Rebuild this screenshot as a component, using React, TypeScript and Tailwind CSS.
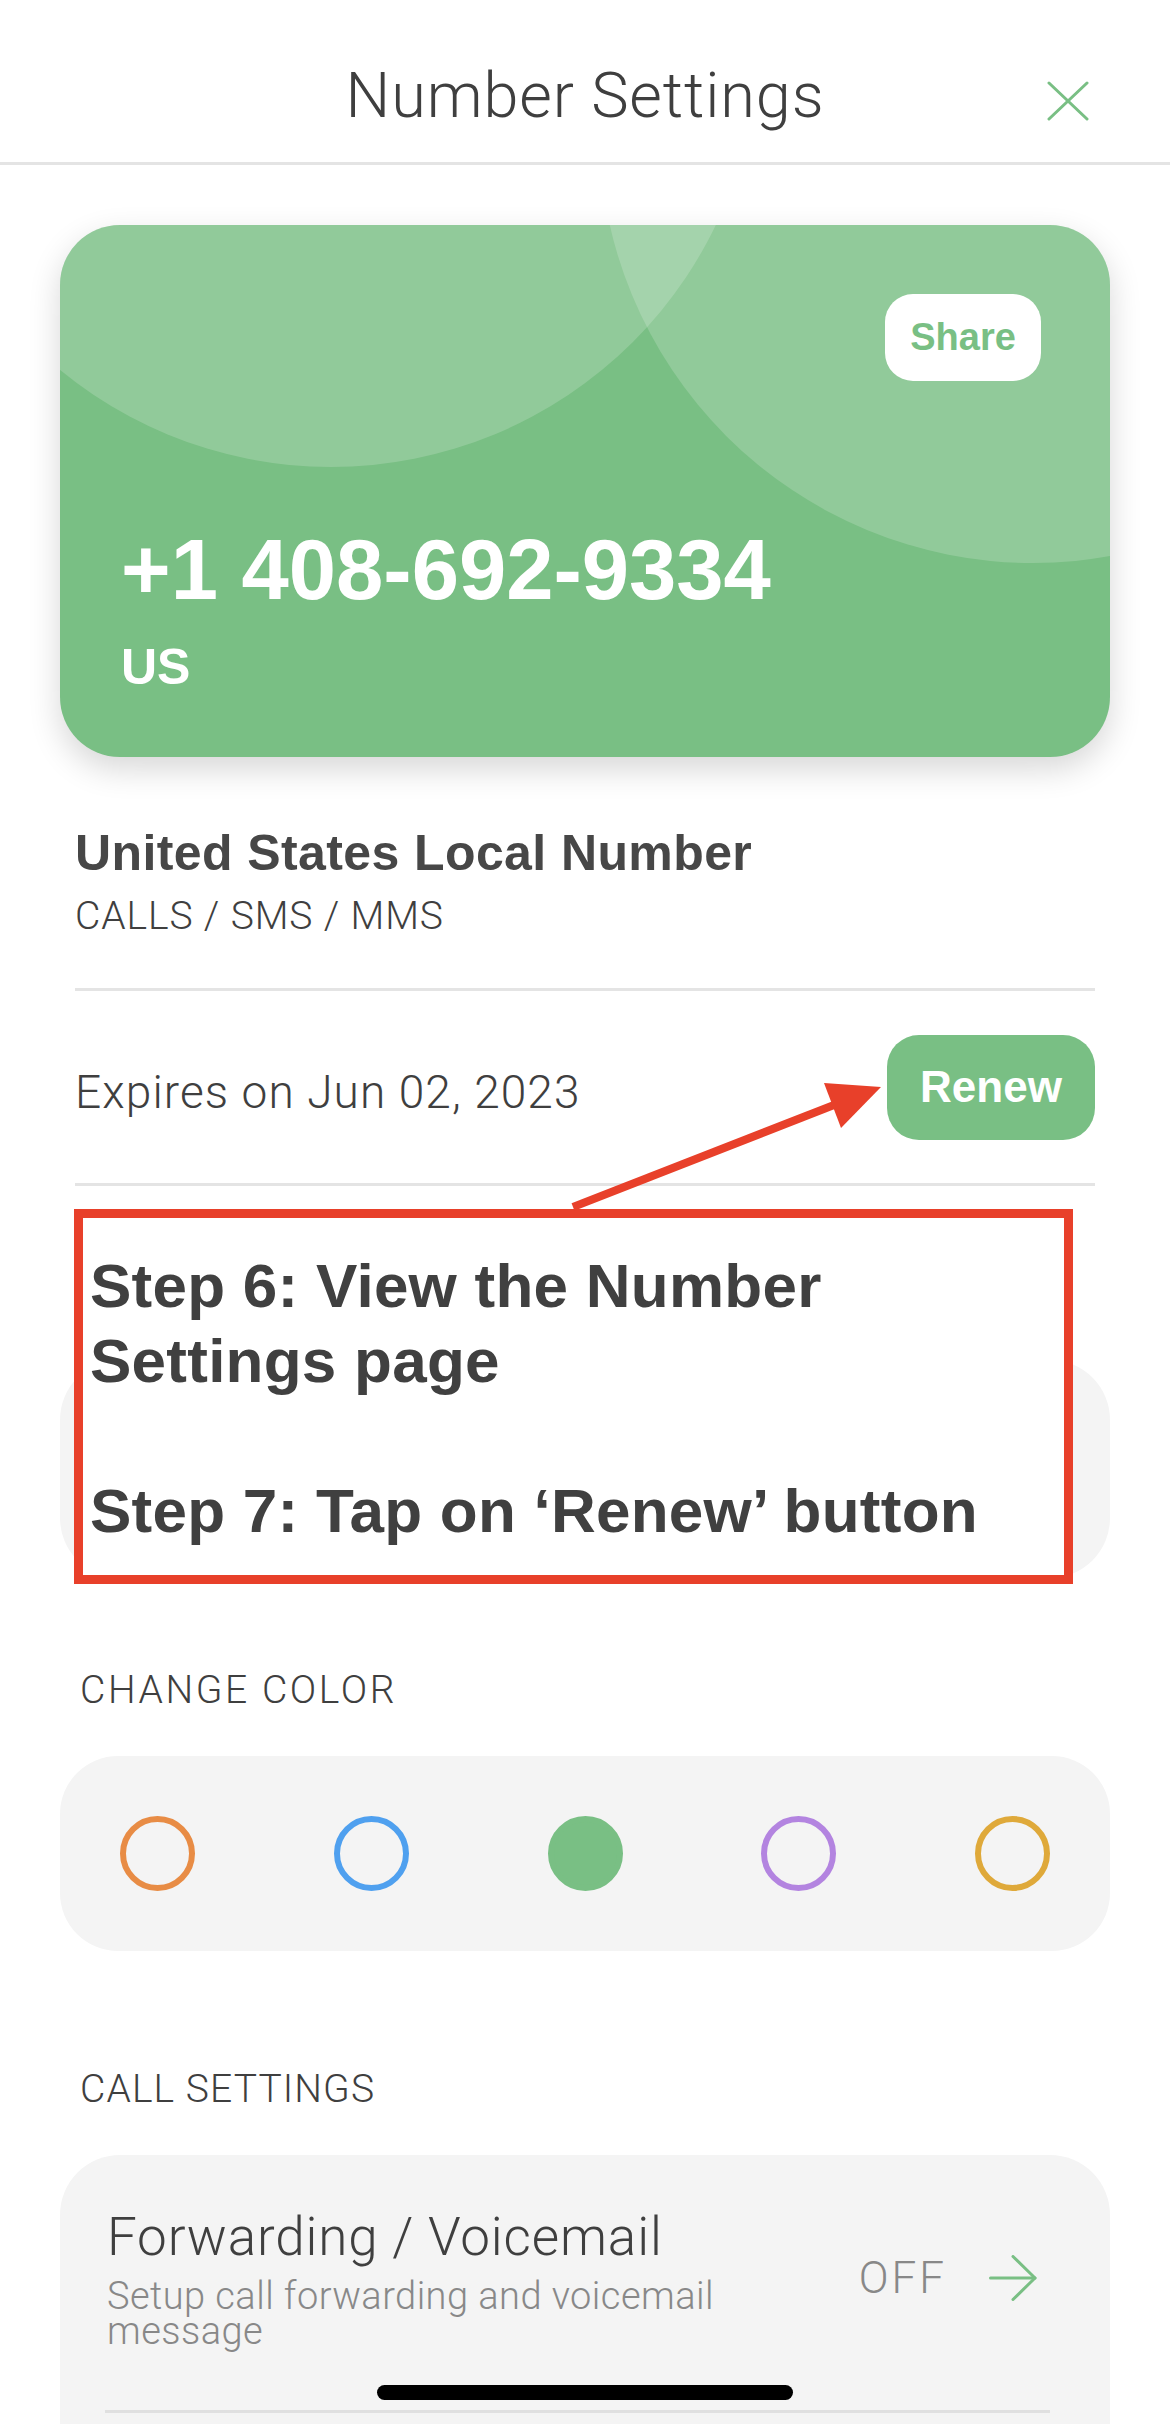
const GREEN = "#79bf84";

function CloseIcon() {
  return (
    <svg width="42" height="40" viewBox="0 0 42 40" fill="none" stroke={GREEN} strokeWidth="3" strokeLinecap="round">
      <line x1="2" y1="2" x2="40" y2="38" />
      <line x1="40" y1="2" x2="2" y2="38" />
    </svg>
  );
}

function ArrowRight() {
  return (
    <svg width="48" height="46" viewBox="0 0 48 46" fill="none" stroke={GREEN} strokeWidth="3" strokeLinecap="round" strokeLinejoin="round">
      <line x1="1.5" y1="23" x2="46" y2="23" />
      <polyline points="24,1.5 46,23 24,44.5" />
    </svg>
  );
}

const swatches = [
  "border-[#e88c45]",
  "border-[#4fa0ef]",
  "border-[#79bf84] bg-[#79bf84]",
  "border-[#b384e0]",
  "border-[#dfa93a]",
];

export default function App() {
  return (
    <div className="relative h-[2424px] w-[1170px] overflow-hidden bg-white font-['Liberation_Sans',Arial,sans-serif] text-[#474747]">
      {/* Header */}
      <header className="grid h-[165px] grid-cols-[1fr_auto_1fr] items-start border-b-[3px] border-[#e4e4e4] pt-[64px]">
        <div />
        <h1 className="font-['Roboto',sans-serif] text-[63px] font-light leading-none tracking-[0.9px] text-[#3f3f3f]">
          Number Settings
        </h1>
        <button className="mr-[81px] mt-[17px] justify-self-end">
          <CloseIcon />
        </button>
      </header>

      {/* Number card */}
      <div className="relative mx-[60px] mt-[60px] flex h-[532px] flex-col overflow-hidden rounded-[60px] bg-[#79bf84] pl-[61px] pr-[69px] pt-[69px] shadow-[0_12px_32px_rgba(0,0,0,0.16)]">
        <div className="absolute left-[-156px] top-[-612px] h-[854px] w-[854px] rounded-full bg-white/[0.18]" />
        <div className="absolute left-[539px] top-[-530px] h-[868px] w-[868px] rounded-full bg-white/[0.18]" />
        <button className="relative h-[87px] w-[156px] self-end rounded-[28px] bg-white text-[38px] font-bold text-[#79bf84]">
          Share
        </button>
        <div className="relative mt-[146px] text-[85px] font-bold leading-none text-white">+1 408-692-9334</div>
        <div className="relative mt-[30px] text-[50px] font-bold leading-none text-white">US</div>
      </div>

      {/* Number info */}
      <section className="mx-[75px]">
        <div className="mt-[66px] text-[50px] font-bold leading-[60px] tracking-[0.4px]">United States Local Number</div>
        <div className="mt-[10px] font-['Roboto',sans-serif] text-[39px] font-light leading-[46px] tracking-[0.9px] text-[#3f3f3f]">
          CALLS / SMS / MMS
        </div>
        <div className="mt-[49px] h-[3px] bg-[#e4e4e4]" />
        <div className="flex h-[192px] items-center justify-between">
          <span className="pt-[10px] font-['Roboto',sans-serif] text-[46px] font-light leading-[54px] tracking-[1.1px] text-[#3f3f3f]">
            Expires on Jun 02, 2023
          </span>
          <button className="h-[105px] w-[208px] rounded-[32px] bg-[#79bf84] text-[44px] font-bold text-white">
            Renew
          </button>
        </div>
        <div className="h-[3px] bg-[#e4e4e4]" />
      </section>

      {/* card hidden behind the annotation */}
      <div className="mx-[60px] mt-[174px] h-[218px] rounded-[60px] bg-[#f4f4f4]" />

      {/* Change color */}
      <div className="ml-[80px] mt-[89px] font-['Roboto',sans-serif] text-[39px] font-light leading-[46px] tracking-[2.6px] text-[#3f3f3f]">
        CHANGE COLOR
      </div>
      <div className="mx-[60px] mt-[43px] flex h-[195px] items-center justify-between rounded-[58px] bg-[#f4f4f4] px-[60px]">
        {swatches.map((c, i) => (
          <div key={i} className={`h-[75px] w-[75px] rounded-full border-[6px] ${c}`} />
        ))}
      </div>

      {/* Call settings */}
      <div className="ml-[80px] mt-[115px] font-['Roboto',sans-serif] text-[39px] font-light leading-[46px] tracking-[1.1px] text-[#3f3f3f]">
        CALL SETTINGS
      </div>
      <div className="mx-[60px] mt-[43px] h-[400px] rounded-t-[60px] bg-[#f4f4f4] pt-[52px] font-['Roboto',sans-serif] font-light">
        <div className="flex items-center justify-between pl-[47px] pr-[73px]">
          <div className="w-[640px]">
            <div className="text-[53px] leading-[60px] tracking-[0.85px] text-[#3f3f3f]">Forwarding / Voicemail</div>
            <div className="mt-[12px] text-[38px] leading-[35px] tracking-[0.45px] text-[#888888]">
              Setup call forwarding and voicemail message
            </div>
          </div>
          <div className="flex items-center gap-[42px]">
            <span className="text-[44px] tracking-[3px] text-[#888888]">OFF</span>
            <ArrowRight />
          </div>
        </div>
        <div className="ml-[45px] mr-[60px] mt-[61px] h-[3px] bg-[#e0e0e0]" />
      </div>

      {/* Annotation overlay */}
      <div className="absolute left-[74px] top-[1209px] h-[375px] w-[999px] border-[9px] border-[#e8402a] bg-white pl-[7px] pt-[30px] text-[62px] font-bold leading-[75px] tracking-[0.25px] text-[#404040]">
        Step 6: View the Number
        <br />
        Settings page
        <br />
        <br />
        Step 7: Tap on ‘Renew’ button
      </div>
      <svg className="pointer-events-none absolute left-0 top-0" width="1170" height="2424" viewBox="0 0 1170 2424">
        <line x1="573" y1="1207" x2="834" y2="1105" stroke="#e8402a" strokeWidth="8" />
        <polygon points="881,1087 824,1083 841,1128" fill="#e8402a" />
      </svg>

      {/* Home indicator */}
      <div className="absolute bottom-[24px] left-[377px] h-[15px] w-[416px] rounded-full bg-black" />
    </div>
  );
}
